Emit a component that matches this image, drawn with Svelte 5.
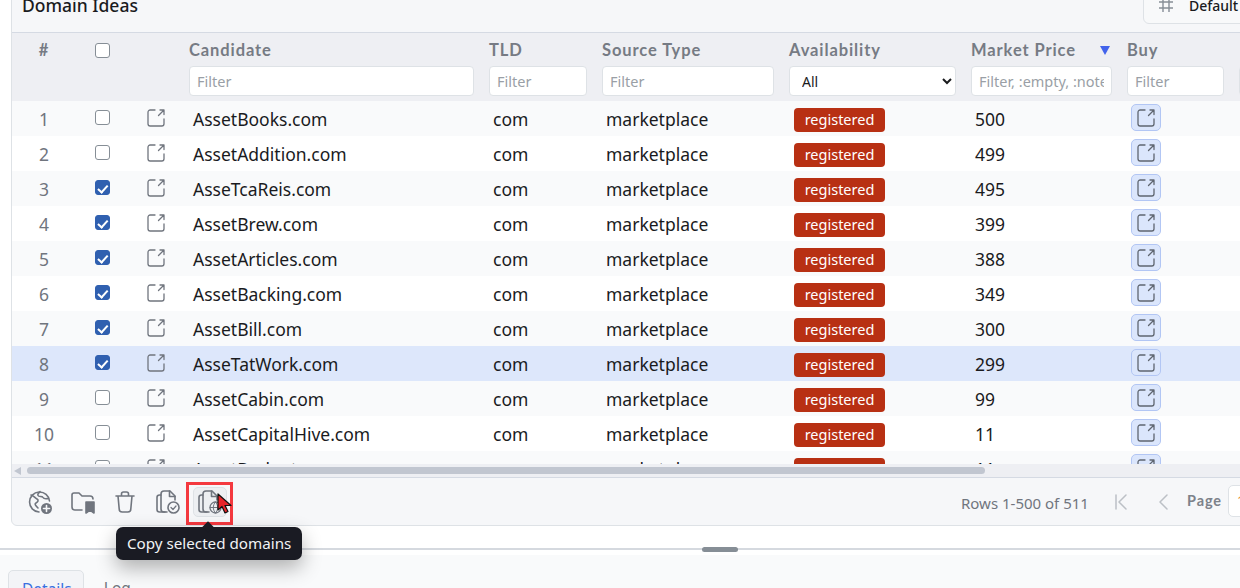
<script>
	const names = [
		['AssetBooks.com', 500, false],
		['AssetAddition.com', 499, false],
		['AsseTcaReis.com', 495, true],
		['AssetBrew.com', 399, true],
		['AssetArticles.com', 388, true],
		['AssetBacking.com', 349, true],
		['AssetBill.com', 300, true],
		['AsseTatWork.com', 299, true],
		['AssetCabin.com', 99, false],
		['AssetCapitalHive.com', 11, false],
		['AssetBudgets.com', 11, false]
	];
	let rows = $state(names.map(([name, price, checked], i) => ({ id: i + 1, name, price, checked })));
	let activeRow = 8;
</script>

{#snippet linkIcon()}
	<svg class="link" width="18" height="18" viewBox="0 0 18 18" fill="none" stroke="currentColor" stroke-width="1.300" stroke-linecap="round" stroke-linejoin="round">
		<path d="M8 1H3.200A2.200 2.200 0 0 0 1 3.200v11.600A2.200 2.200 0 0 0 3.200 17h11.600a2.200 2.200 0 0 0 2.200-2.200V10" />
		<path d="M11.500 6.500L17 1M13 1h4v4.500" />
	</svg>
{/snippet}

<div class="page">
	<section class="card">
		<div class="titlebar">
			<h2>Domain Ideas</h2>
			<button class="views">
				<svg width="18" height="18" viewBox="0 0 18 18" fill="none" stroke="currentColor" stroke-width="1.400"><path d="M6 2v14M12 2v14M2 6h14M2 12h14" /></svg>
				Default
			</button>
		</div>

		<div class="thead">
			<div class="cell center"><span class="th">#</span></div>
			<div class="cell center"><input type="checkbox" class="check" /></div>
			<div class="cell"></div>
			<div class="cell"><span class="th">Candidate</span><input class="filter" placeholder="Filter" /></div>
			<div class="cell"><span class="th">TLD</span><input class="filter" placeholder="Filter" /></div>
			<div class="cell"><span class="th">Source Type</span><input class="filter" placeholder="Filter" /></div>
			<div class="cell"><span class="th">Availability</span>
				<select class="filter select"><option>All</option></select>
			</div>
			<div class="cell"><span class="th sorted">Market Price <i class="sort"></i></span><input class="filter" placeholder="Filter, :empty, :notempty" /></div>
			<div class="cell"><span class="th">Buy</span><input class="filter" placeholder="Filter" /></div>
			<div class="cell"><span class="th">&nbsp;</span><input class="filter" /></div>
		</div>

		<div class="tbody">
			{#each rows as row (row.id)}
				<div class="row" class:active={row.id === activeRow}>
					<div class="num">{row.id}</div>
					<div class="mid"><input type="checkbox" class="check" bind:checked={row.checked} /></div>
					<div class="mid open">{@render linkIcon()}</div>
					<div class="text">{row.name}</div>
					<div class="text">com</div>
					<div class="text">marketplace</div>
					<div class="text badgecell"><span class="badge">registered</span></div>
					<div class="text">{row.price}</div>
					<div class="text buycell"><span class="buy">{@render linkIcon()}</span></div>
					<div></div>
				</div>
			{/each}
		</div>

		<div class="scrollbar">
			<i class="arrow"></i>
			<div class="thumb"></div>
		</div>

		<div class="toolbar">
			<div class="tools">
				<button class="tool" aria-label="Add domains">
					<svg width="26" height="26" viewBox="0 0 26 26" fill="none" stroke="currentColor" stroke-width="1.600" stroke-linecap="round" stroke-linejoin="round">
						<path d="M12 23a10 10 0 1 1 10.500-11" />
						<path d="M4 6c3 1 4 3 6 4s1 3-1 4 0 3 2 5M13 2.500c-1 2-3 2-2 4s4 0 5 2 4 1 5.500 1" />
						<circle cx="19.500" cy="19.500" r="5.500" fill="currentColor" stroke="none" />
						<path d="M19.500 16.500v6M16.500 19.500h6" stroke="#f6f7f9" />
					</svg>
				</button>
				<button class="tool" aria-label="Bookmark folder">
					<svg width="26" height="26" viewBox="0 0 26 26" fill="none" stroke="currentColor" stroke-width="1.600" stroke-linecap="round" stroke-linejoin="round">
						<path d="M12 21H5a3 3 0 0 1-3-3V6a2 2 0 0 1 2-2h5l3 3h8a3 3 0 0 1 3 3" />
						<path d="M16 13h8v11l-4-3-4 3z" fill="currentColor" />
					</svg>
				</button>
				<button class="tool" aria-label="Delete">
					<svg width="26" height="26" viewBox="0 0 26 26" fill="none" stroke="currentColor" stroke-width="1.600" stroke-linecap="round" stroke-linejoin="round">
						<path d="M4 7h18M9.500 7V5a2 2 0 0 1 2-2h3a2 2 0 0 1 2 2v2M6 7l1.200 13a3 3 0 0 0 3 3h5.600a3 3 0 0 0 3-3L20 7" />
					</svg>
				</button>
				<button class="tool" aria-label="Copy checked">
					<svg width="26" height="26" viewBox="0 0 26 26" fill="none" stroke="currentColor" stroke-width="1.600" stroke-linecap="round" stroke-linejoin="round">
						<path d="M6 6H4.500A2.500 2.500 0 0 0 2 8.500v12A2.500 2.500 0 0 0 4.500 23H10" />
						<path d="M12 23H9a3 3 0 0 1-3-3V5a3 3 0 0 1 3-3h6l5 5v4" />
						<path d="M14.500 2v5.500H20" />
						<circle cx="18.500" cy="18.500" r="5.500" />
						<path d="M16 18.500l2 2 3-3.500" stroke-width="1.200" />
					</svg>
				</button>
				<button class="tool hover" aria-label="Copy selected domains">
					<svg width="26" height="26" viewBox="0 0 26 26" fill="none" stroke="currentColor" stroke-width="1.600" stroke-linecap="round" stroke-linejoin="round">
						<path d="M6 6H4.500A2.500 2.500 0 0 0 2 8.500v12A2.500 2.500 0 0 0 4.500 23H10" />
						<path d="M12 23H9a3 3 0 0 1-3-3V5a3 3 0 0 1 3-3h6l5 5v4" />
						<path d="M14.500 2v5.500H20" />
						<circle cx="18.500" cy="18.500" r="5.500" stroke-width="1.300" />
						<path d="M13 18.500h11M18.500 13c-3 3.500-3 7.500 0 11M18.500 13c3 3.500 3 7.500 0 11" stroke-width="1" />
					</svg>
				</button>
			</div>
			<div class="pager">
				<span class="count">Rows 1-500 of 511</span>
				<svg class="nav" width="20" height="20" viewBox="0 0 20 20" fill="none" stroke="currentColor" stroke-width="1.500" stroke-linecap="round" stroke-linejoin="round"><path d="M5 3v14M15 3l-7 7 7 7" /></svg>
				<svg class="nav" width="20" height="20" viewBox="0 0 20 20" fill="none" stroke="currentColor" stroke-width="1.500" stroke-linecap="round" stroke-linejoin="round"><path d="M14 3l-7 7 7 7" /></svg>
				<span class="pagelabel">Page</span>
				<span class="pagebox">1</span>
			</div>
		</div>

		<div class="highlight"></div>
		<svg class="cursor" width="16" height="22" viewBox="0 0 16 22"><path d="M1 1v16l4-3.500 3 6.500 3-1.500-3-6h6z" fill="#e8252a" stroke="#111" stroke-width="1.200" stroke-linejoin="round" /></svg>
		<div class="tooltip">Copy selected domains</div>
	</section>

	<div class="splitter"><span></span></div>

	<div class="panel">
		<div class="tabs">
			<span class="tab current">Details</span>
			<span class="tab">Log</span>
		</div>
	</div>
</div>

<style>
	:global(body) {
		margin: 0;
		background: #fff;
	}
	.page {
		height: 588px;
		overflow: hidden;
		font-family: "Noto Sans", "Open Sans", sans-serif;
		color: #1a1b1e;
		display: flex;
		flex-direction: column;
	}
	.card {
		position: relative;
		margin: -14px -40px 0 11px;
		border: 1px solid #dee2e6;
		border-radius: 6px;
		background: #f6f7f9;
		box-sizing: border-box;
		height: 540px;
		flex: none;
		width: 1269px;
	}
	.titlebar {
		height: 46px;
		display: flex;
		align-items: flex-start;
		justify-content: space-between;
		border-bottom: 1px solid #d5dae3;
		box-sizing: border-box;
		padding-left: 10px;
	}
	h2 {
		margin: 5px 0 0;
		font-size: 17.500px;
		font-weight: 500;
		line-height: 26px;
	}
	.views {
		width: 136px;
		height: 38px;
		border: 1px solid #dee2e6;
		border-radius: 6px;
		background: #f8f9fa;
		display: flex;
		align-items: center;
		gap: 14px;
		padding: 0 0 0 13px;
		font: 500 14px "Noto Sans", sans-serif;
		color: #1a1b1e;
		margin-top: -1px;
		flex: none;
	}
	.views svg {
		color: #868e96;
	}
	.thead,
	.row {
		display: grid;
		grid-template-columns: 64px 52px 53px 300px 113px 187px 182px 156px 112px 120px;
	}
	.thead {
		height: 68px;
		background: #eeeff3;
		box-sizing: border-box;
	}
	.cell {
		padding: 6px 7px 0 8px;
		display: flex;
		flex-direction: column;
		gap: 5px;
		min-width: 0;
	}
	.cell.center {
		align-items: center;
		padding: 6px 0 0;
	}
	.th {
		font-family: Lato, sans-serif;
		font-size: 16.500px;
		font-weight: 700;
		letter-spacing: 0.9px;
		line-height: 22px;
		color: #767b84;
		white-space: nowrap;
	}
	.sorted {
		display: flex;
		justify-content: space-between;
		align-items: center;
	}
	.sort {
		width: 0;
		height: 0;
		margin-right: 2px;
		border-left: 5px solid transparent;
		border-right: 5px solid transparent;
		border-top: 9px solid #4263eb;
	}
	.filter {
		box-sizing: border-box;
		width: 100%;
		height: 30px;
		border: 1px solid #dee2e6;
		border-radius: 4px;
		background: #fff;
		padding: 0 7px;
		font: 14.500px "Noto Sans", sans-serif;
		color: #1a1b1e;
		outline: none;
	}
	.filter::placeholder {
		color: #9a9fa6;
		opacity: 1;
	}
	.select {
		padding: 0 0 0 8px;
		font-size: 14px;
	}
	.check {
		appearance: none;
		margin: 0;
		width: 15px;
		height: 15px;
		border: 1px solid #868e96;
		border-radius: 3px;
		background: #fff;
		position: relative;
	}
	.check:checked {
		background: #3060b0;
		border-color: #3060b0;
	}
	.check:checked::after {
		content: "";
		position: absolute;
		left: 4.500px;
		top: 1.500px;
		width: 4px;
		height: 7.500px;
		border: solid #fff;
		border-width: 0 2px 2px 0;
		transform: rotate(42deg);
	}
	.thead .check {
		margin-top: 4px;
	}
	.tbody {
		height: 363px;
		overflow: hidden;
	}
	.row {
		height: 35px;
		background: #fff;
		font-size: 17.500px;
	}
	.row:nth-child(odd) {
		background: #f9fafb;
	}
	.row.active {
		background: #dde7fb;
	}
	.num {
		text-align: center;
		line-height: 37px;
		color: #70757e;
	}
	.mid {
		display: flex;
		justify-content: center;
		padding-top: 9px;
	}
	.mid .check {
		margin-top: 0;
	}
	.open {
		padding-top: 8px;
		color: #70757e;
	}
	.open .link {
		margin-left: 2px;
	}
	.text {
		padding-left: 12px;
		line-height: 36px;
		white-space: nowrap;
	}
	.badgecell {
		display: flex;
		align-items: flex-start;
		padding: 7px 0 0 13px;
	}
	.badge {
		width: 91px;
		height: 24px;
		line-height: 23px;
		text-align: center;
		border-radius: 4px;
		background: #b83013;
		color: #fff;
		font-size: 14.500px;
	}
	.buycell {
		padding: 3px 0 0 12px;
	}
	.buy {
		display: flex;
		align-items: center;
		justify-content: center;
		box-sizing: border-box;
		width: 30px;
		height: 27px;
		border: 1.500px solid #b2c6f4;
		border-radius: 5px;
		background: #dbe6fc;
		color: #5f6670;
	}
	.scrollbar {
		height: 13px;
		background: #eeeff3;
		border-bottom: 1px solid #d5dae3;
		position: relative;
		box-sizing: content-box;
	}
	.arrow {
		position: absolute;
		left: 2px;
		top: 3px;
		width: 0;
		height: 0;
		border-top: 4px solid transparent;
		border-bottom: 4px solid transparent;
		border-right: 7px solid #c1c6d0;
	}
	.thumb {
		position: absolute;
		left: 15px;
		top: 3px;
		width: 958px;
		height: 7px;
		border-radius: 4px;
		background: #c1c6d0;
	}
	.toolbar {
		height: 48px;
		display: flex;
		justify-content: space-between;
		align-items: center;
		box-sizing: border-box;
	}
	.tools {
		display: flex;
		gap: 8.500px;
		padding-left: 11px;
	}
	.tool {
		width: 34px;
		height: 30px;
		padding: 0;
		border: 1px solid transparent;
		border-radius: 5px;
		background: none;
		color: #70757e;
		display: flex;
		align-items: center;
		justify-content: center;
	}
	.tool.hover {
		background: #edeff2;
		border-color: #dee2e6;
	}
	.pager {
		display: flex;
		align-items: center;
		width: 318px;
		color: #70757e;
		flex: none;
	}
	.count {
		font-size: 15px;
		margin-top: 2px;
		white-space: nowrap;
		width: 150px;
		flex: none;
	}
	.nav {
		color: #bcc0c6;
		flex: none;
		margin-right: 22px;
	}
	.pagelabel {
		font-family: Lato, sans-serif;
		font-weight: 700;
		font-size: 14.500px;
		letter-spacing: 0.9px;
		margin-left: -8px;
		margin-top: -4px;
		color: #7d828a;
	}
	.pagebox {
		margin-left: 6px;
		margin-top: -2px;
		width: 40px;
		height: 32px;
		box-sizing: border-box;
		border: 1px solid #dee2e6;
		border-radius: 5px;
		background: #fff;
		padding-left: 8px;
		line-height: 30px;
		font-size: 14px;
		color: #e8923a;
		flex: none;
	}
	.highlight {
		position: absolute;
		z-index: 5;
		left: 174px;
		top: 495px;
		width: 47px;
		height: 43px;
		border: 3px solid #f4393f;
		box-sizing: border-box;
		pointer-events: none;
	}
	.cursor {
		position: absolute;
		z-index: 6;
		left: 205px;
		top: 506px;
	}
	.tooltip {
		position: absolute;
		z-index: 5;
		left: 104px;
		top: 540px;
		height: 33px;
		padding: 0 11px;
		line-height: 32px;
		border-radius: 7px;
		background: #1a1b23;
		color: #f1f3f5;
		font-size: 15.200px;
		white-space: nowrap;
		box-shadow: 0 8px 20px rgba(0, 0, 0, 0.3);
	}
	.tooltip::before {
		content: "";
		position: absolute;
		left: 88px;
		top: -4px;
		width: 8px;
		height: 8px;
		background: #1a1b23;
		transform: rotate(45deg);
	}
	.splitter {
		height: 7px;
		flex: none;
		position: relative;
		box-sizing: border-box;
		margin-top: 22px;
		border-top: 2px solid #d5d9df;
	}
	.splitter span {
		position: absolute;
		left: 702px;
		top: -3px;
		width: 36px;
		height: 5px;
		border-radius: 3px;
		background: #868e96;
	}
	.panel {
		flex: 1;
		background: #f9fafb;
	}
	.tabs {
		display: flex;
		padding: 15px 0 0 8px;
		gap: 7px;
	}
	.tab {
		height: 40px;
		box-sizing: border-box;
		padding: 6px 11px 6px 13px;
		font-size: 15.500px;
		line-height: 24px;
		color: #70757e;
	}
	.tab.current {
		border: 1px solid #dee2e6;
		border-radius: 5px 5px 0 0;
		background: #f3f4f7;
		color: #3a6fe0;
	}
</style>
